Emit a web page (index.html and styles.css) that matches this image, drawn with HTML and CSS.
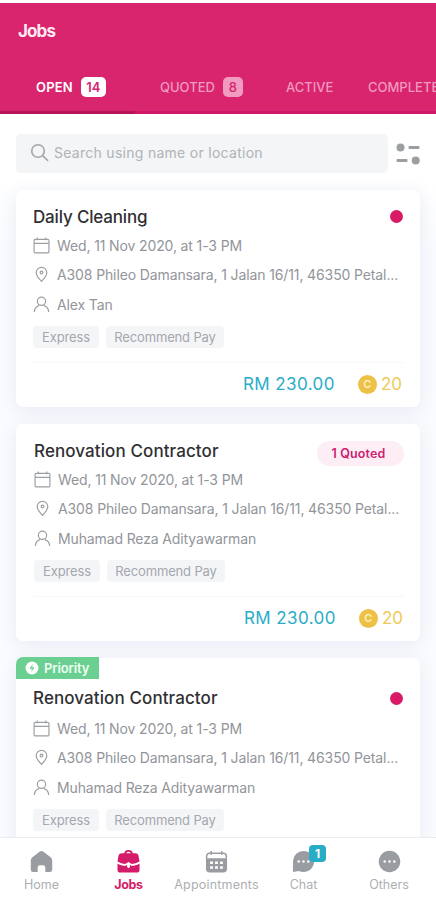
FILE: index.html
```
<!DOCTYPE html>
<html lang="en">
<head>
<meta charset="utf-8">
<title>Jobs</title>
<link rel="stylesheet" href="styles.css">
</head>
<body>
<svg width="0" height="0" class="defs">
  <symbol id="calendar" viewBox="0 0 16 16"><path d="M2.200 2.200h11.600a1.200 1.200 0 0 1 1.200 1.200v10.400a1.200 1.200 0 0 1-1.200 1.200H2.200A1.200 1.200 0 0 1 1 13.800V3.400a1.200 1.200 0 0 1 1.200-1.200zM1 6h14M4 .5v2.500M12 .5v2.500"/></symbol>
  <symbol id="pin" viewBox="0 0 16 16"><path d="M8 14.500C5.500 11.800 3 9 3 6.300a5 5 0 0 1 10 0c0 2.700-2.500 5.500-5 8.200z"/><circle cx="8" cy="6.200" r="1.300"/></symbol>
  <symbol id="person" viewBox="0 0 16 16"><circle cx="8" cy="5" r="3.900"/><path d="M1.200 15c.3-3.500 2-5.300 4.500-6M14.800 15c-.3-3.500-2-5.300-4.500-6"/></symbol>
</svg>
<div class="app">
  <header class="header">
    <h1>Jobs</h1>
    <nav class="tabs">
      <div class="tab tab-open active"><span>OPEN</span><b class="count">14</b></div>
      <div class="tab tab-quoted"><span>QUOTED</span><b class="count">8</b></div>
      <div class="tab tab-active"><span>ACTIVE</span></div>
      <div class="tab tab-completed"><span>COMPLETED</span></div>
    </nav>
  </header>

  <div class="toolbar">
    <div class="search">
      <svg width="20" height="20" viewBox="0 0 20 20"><circle cx="8" cy="8" r="6.300"/><path d="M12.600 12.600l5 4.800"/></svg>
      <span>Search using name or location</span>
    </div>
    <svg class="filter" width="26" height="24" viewBox="0 0 26 24"><circle cx="5.500" cy="5.500" r="4"/><rect x="13.500" y="4" width="11" height="3" rx="1"/><rect x="1.500" y="17" width="11" height="3" rx="1"/><circle cx="20.700" cy="18.500" r="4"/></svg>
  </div>

  <main class="list">
    <article class="card">
      <div class="head"><h2 class="short">Daily Cleaning</h2><i class="dot"></i></div>
      <div class="row date"><svg><use href="#calendar"/></svg><span>Wed, 11 Nov 2020, at 1-3 PM</span></div>
      <div class="row place"><svg><use href="#pin"/></svg><span>A308 Phileo Damansara, 1 Jalan 16/11, 46350 Petal...</span></div>
      <div class="row who"><svg><use href="#person"/></svg><span>Alex Tan</span></div>
      <div class="tags"><span class="express">Express</span><span class="pay">Recommend Pay</span></div>
      <div class="foot"><span class="price">RM 230.00</span><b class="coin">C</b><span class="credits">20</span></div>
    </article>

    <article class="card second">
      <div class="head"><h2>Renovation Contractor</h2><span class="quoted">1 Quoted</span></div>
      <div class="row date"><svg><use href="#calendar"/></svg><span>Wed, 11 Nov 2020, at 1-3 PM</span></div>
      <div class="row place"><svg><use href="#pin"/></svg><span>A308 Phileo Damansara, 1 Jalan 16/11, 46350 Petal...</span></div>
      <div class="row who"><svg><use href="#person"/></svg><span>Muhamad Reza Adityawarman</span></div>
      <div class="tags"><span class="express">Express</span><span class="pay">Recommend Pay</span></div>
      <div class="foot"><span class="price">RM 230.00</span><b class="coin">C</b><span class="credits">20</span></div>
    </article>

    <article class="card priority">
      <div class="ribbon"><svg width="14" height="14" viewBox="0 0 14 14"><circle cx="7" cy="7" r="6.500" fill="#fff"/><path d="M8 3L4.300 7.700H7L6 11l3.700-4.700H7z" fill="#6bcf91"/></svg><span>Priority</span></div>
      <div class="head"><h2>Renovation Contractor</h2><i class="dot"></i></div>
      <div class="row date"><svg><use href="#calendar"/></svg><span>Wed, 11 Nov 2020, at 1-3 PM</span></div>
      <div class="row place"><svg><use href="#pin"/></svg><span>A308 Phileo Damansara, 1 Jalan 16/11, 46350 Petal...</span></div>
      <div class="row who"><svg><use href="#person"/></svg><span>Muhamad Reza Adityawarman</span></div>
      <div class="tags"><span class="express">Express</span><span class="pay">Recommend Pay</span></div>
    </article>
  </main>

  <nav class="bottom">
    <div class="item home"><svg viewBox="0 0 24 24"><path d="M10.300 1.600Q12 .4 13.700 1.600L21.500 7.500Q23.200 9 23.200 11V20.500q0 2.500-2.500 2.500H16V18.500q0-2.500-2.500-2.500h-3Q8 16 8 18.500V23H3.300Q.8 23 .8 20.500V11Q.8 9 2.500 7.500z"/></svg><span>Home</span></div>
    <div class="item jobs"><svg viewBox="0 0 24 24"><path fill-rule="evenodd" d="M7.500 3.500Q8 0 12 0t4.500 3.500H19q3 0 3.500 3L23.500 12q-4 2.300-8 2.600L12 12.500 8.500 14.600Q4 14.300.5 12L1.500 6.500Q2 3.500 5 3.500zm2 0h5Q14 1.700 12 1.700T9.500 3.500z"/><path d="M.5 14.300q3.500 2 8 2.500L10.500 15.500v2.300L12 19l1.500-1.200v-2.300l2 1.300q4.500-.5 8-2.500V20.500q0 3-3 3h-17q-3 0-3-3z"/></svg><span>Jobs</span></div>
    <div class="item appointments"><svg viewBox="0 0 24 24"><path d="M6.500 1v4M17.500 1v4M1.700 9V6.500q0-3.200 3.200-3.200h14.200q3.200 0 3.200 3.200V9" fill="none" stroke="#999ca1" stroke-width="1.500"/><path d="M1 8.500h22v11q0 4-4 4H5q-4 0-4-4z"/><g fill="#fff"><path d="M5.300 12h3v2.500h-3zM10.500 12h3v2.500h-3zM15.700 12h3v2.500h-3zM5.300 17h3v2.500h-3zM10.500 17h3v2.500h-3zM15.700 17h3v2.500h-3z"/></g></svg><span>Appointments</span></div>
    <div class="item chat"><svg viewBox="0 0 24 24"><path d="M12 1a11 11 0 1 1-5 20.800L1 23V12A11 11 0 0 1 12 1z"/><g fill="#fff"><circle cx="7" cy="12" r="1.300"/><circle cx="12" cy="12" r="1.300"/><circle cx="17" cy="12" r="1.300"/></g></svg><b class="notice">1</b><span>Chat</span></div>
    <div class="item others"><svg viewBox="0 0 24 24"><circle cx="12" cy="12" r="11.200"/><g fill="#fff"><circle cx="7" cy="12" r="1.300"/><circle cx="12" cy="12" r="1.300"/><circle cx="17" cy="12" r="1.300"/></g></svg><span>Others</span></div>
  </nav>
</div>
</body>
</html>
```
FILE: styles.css
```
* { box-sizing: border-box; }
body { margin: 0; font-family: Inter, "Liberation Sans", sans-serif; background: #fff; color: #92959a; }
h1, h2 { margin: 0; }
.defs { position: absolute; }
.app { width: 436px; height: 900px; padding-top: 3px; overflow: hidden; display: flex; flex-direction: column; }
.header { flex: none; height: 111px; background: #d9246e; display: flex; flex-direction: column; }
h1 { font-size: 17px; line-height: 24px; font-weight: 700; color: #ffeaf4; margin: 16px 0 0 18px; letter-spacing: -.9px; }
.tabs { margin-top: auto; height: 52px; display: flex; overflow: hidden; }
.tab { flex: none; display: flex; align-items: center; height: 52px; gap: 8px; font-size: 13px; font-weight: 500; color: #f19ac0; border-bottom: 3px solid #d0176a; white-space: nowrap; }
.tab-open { width: 135px; padding-left: 36px; }
.tab-quoted { width: 126px; padding-left: 25px; }
.tab-active { width: 92px; padding-left: 25px; }
.tab-completed { width: 110px; padding-left: 15px; }
.tab.active { color: #fff; font-weight: 600; border-bottom-color: #b61359; }
.tab-open span { letter-spacing: .2px; }
.count { height: 20px; min-width: 20px; border-radius: 5px; background: #f29bc1; color: #d9246e; display: flex; align-items: center; justify-content: center; font-size: 13px; font-weight: 500; }
.active .count { min-width: 25px; background: #fff; font-weight: 600; }
.toolbar { flex: none; height: 39px; margin: 20px 16px 0; display: flex; align-items: center; gap: 7px; }
.search { flex: none; width: 372px; height: 39px; border-radius: 5px; background: #f3f5f7; display: flex; align-items: center; padding-left: 14px; gap: 4px; font-size: 14px; letter-spacing: .28px; color: #b0b3b6; white-space: nowrap; }
.search span { margin-top: -2px; }
.search svg { margin-top: -1px; fill: none; stroke: #a5a8ab; stroke-width: 1.600; stroke-linecap: round; }
.filter { flex: none; fill: #9c9fa1; }
.list { flex: 1; min-height: 0; overflow: hidden; padding: 17px 16px 0; display: flex; flex-direction: column; gap: 17px; background: linear-gradient(#fff, #fafbfe 80px); }
.card { flex: none; height: 217px; background: #fff; border-radius: 7px; padding: 12px 16px 0 17px; box-shadow: 0 4px 18px #e6eaf3; display: flex; flex-direction: column; }
.head { height: 29px; display: flex; align-items: center; justify-content: space-between; }
h2 { font-size: 17px; line-height: 28px; font-weight: 500; color: #303033; letter-spacing: .1px; }
.short { letter-spacing: -.17px; }
.dot { width: 13px; height: 13px; margin-right: 1px; border-radius: 50%; background: #d91a67; }
.row { height: 29px; display: flex; align-items: center; gap: 7px; font-size: 14px; white-space: nowrap; }
.row svg { width: 17px; height: 17px; flex: none; fill: none; stroke: #9b9ea2; stroke-width: 1.100; }
.date span { letter-spacing: -.13px; }
.place span { letter-spacing: -.12px; }
.who { height: 30px; }
.who span { letter-spacing: -.13px; }
.tags { margin-top: 7px; display: flex; gap: 7px; font-size: 13px; color: #a4a7af; }
.tags span { height: 22px; border-radius: 4px; background: #f4f5f7; display: flex; align-items: center; justify-content: center; white-space: nowrap; }
.tags .express { width: 66px; letter-spacing: -.1px; }
.tags .pay { width: 118px; letter-spacing: -.15px; }
.foot { margin-top: 14px; height: 43px; padding-right: 2px; border-top: 1px solid #f7f8fa; display: flex; align-items: center; justify-content: flex-end; font-size: 17px; color: #efca58; }
.price { color: #29adc7; letter-spacing: .43px; }
.coin { width: 19px; height: 19px; border-radius: 50%; background: #edc046; color: #fff1bd; font-size: 11px; font-weight: 600; display: flex; align-items: center; justify-content: center; margin: 0 4px 0 23px; }
.second { padding-left: 18px; }
.second .foot { padding-right: 1px; }
.quoted { width: 87px; height: 25px; margin-top: 5px; border-radius: 13px; background: #fdeef5; color: #cd2272; font-size: 12.500px; font-weight: 600; display: flex; align-items: center; justify-content: center; padding-right: 4px; letter-spacing: .15px; }
.priority { padding-top: 0; }
.ribbon { flex: none; width: 83px; height: 22px; margin-left: -17px; margin-top: -1px; margin-bottom: 4px; background: #6bcf91; border-radius: 7px 0 0 0; color: #effff4; display: flex; align-items: center; gap: 5px; padding-left: 9px; font-size: 13px; font-weight: 600; letter-spacing: -.1px; }
.priority .head { height: 31px; }
.priority h2 { margin-top: -2px; }
.bottom { flex: none; height: 63px; background: #fff; border-top: 1px solid #e8ebef; display: flex; margin-left: -2px; }
.item { flex: none; width: 87px; padding-top: 12px; display: flex; flex-direction: column; align-items: center; position: relative; font-size: 12.500px; line-height: 16px; color: #adafb2; }
.item svg { width: 23px; height: 23px; margin-bottom: 4px; fill: #999ca1; }
.item.jobs { color: #d41b69; font-weight: 700; letter-spacing: -.3px; }
.item.jobs svg { fill: #d41b69; }
.item.appointments { width: 89px; letter-spacing: .2px; }
.item.chat { width: 85px; }
.item.others { width: 86px; }
.notice { position: absolute; left: 48px; top: 7px; width: 17px; height: 17px; border-radius: 4px; background: #29adc7; color: #fff; font-size: 12px; line-height: 17px; text-align: center; }
```
